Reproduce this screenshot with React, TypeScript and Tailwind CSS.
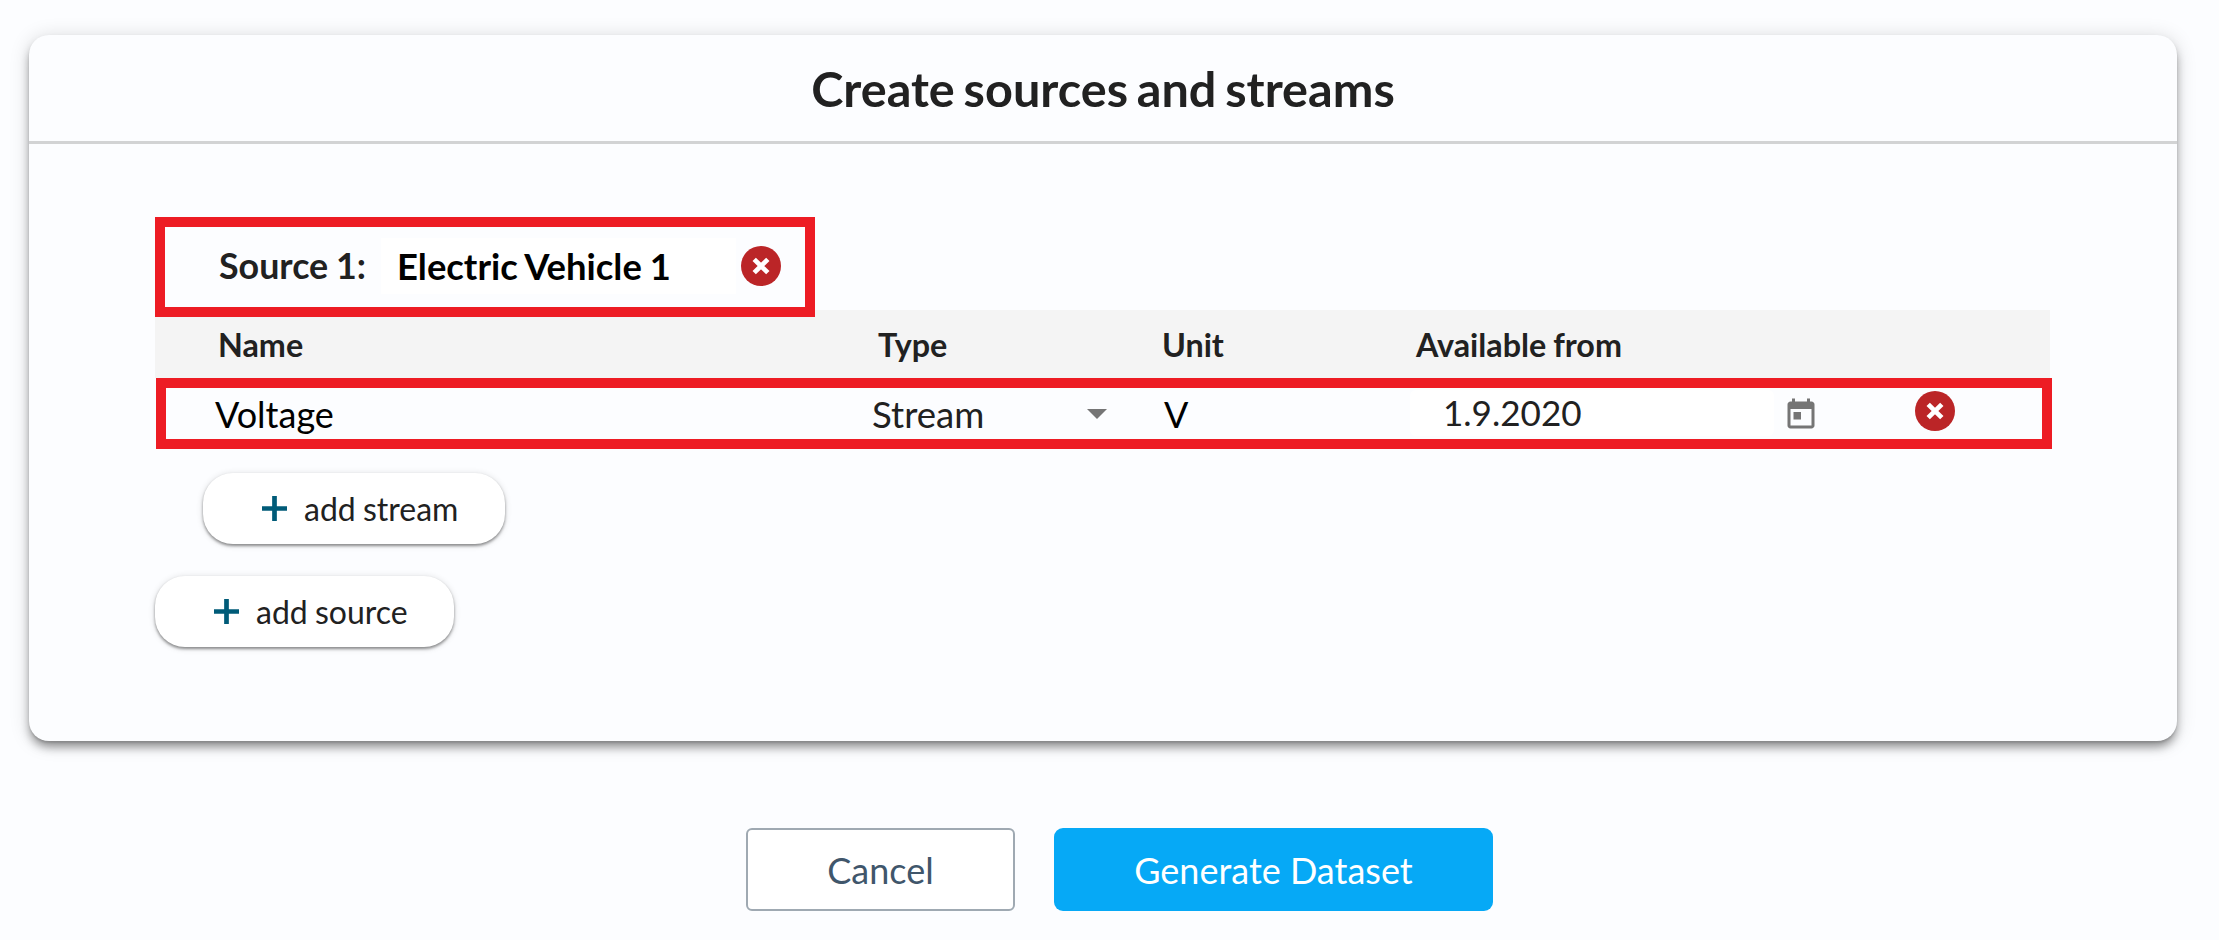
import type { ReactNode } from "react";

function RemoveIcon() {
  return (
    <svg viewBox="0 0 40 40" className="block size-10 shrink-0">
      <circle cx="20" cy="20" r="20" fill="#bb2527" />
      <path d="M13.2 13.4 L26.8 26.6 M26.8 13.4 L13.2 26.6" stroke="#fff" strokeWidth="4.8" />
    </svg>
  );
}

function TodayIcon() {
  return (
    <svg viewBox="0 0 24 24" className="block size-9 shrink-0" fill="#757575">
      <path d="M19 3h-1V1h-2v2H8V1H6v2H5c-1.11 0-1.99.9-1.99 2L3 19c0 1.1.89 2 2 2h14c1.1 0 2-.9 2-2V5c0-1.1-.9-2-2-2zm0 16H5V8h14v11zM7 10h5v5H7z" />
    </svg>
  );
}

function AddButton({ children, className }: { children: ReactNode; className: string }) {
  return (
    <button
      className={`flex h-[71px] items-center rounded-[30px] bg-white pl-[59px] text-[32px] leading-none text-[#212121] [word-spacing:-1px] shadow-[0_2px_3px_rgba(0,0,0,0.4),0_1px_7px_rgba(0,0,0,0.14)] ${className}`}
    >
      <svg viewBox="0 0 25 25" className="mr-[17px] block size-[25px] shrink-0">
        <path d="M12.5 0V25M0 12.5H25" stroke="#005b78" strokeWidth="4.7" />
      </svg>
      <span>{children}</span>
    </button>
  );
}

export default function App() {
  return (
    <div className="h-[940px] w-[2219px] overflow-hidden bg-[#fcfdff] pt-[35px] pl-[29px] font-['Lato',sans-serif] text-[#212121]">
      <section className="h-[706px] w-[2148px] rounded-[20px] bg-[#fcfdff] shadow-[0_7px_10px_-1px_rgba(0,0,0,0.38),0_2px_2px_rgba(0,0,0,0.1),0_2px_20px_rgba(0,0,0,0.15)]">
        <h1 className="flex h-[109px] items-center justify-center border-b-[3px] border-[#d2d3d4] text-[48.6px] leading-none font-bold [word-spacing:-3px]">
          <span>Create sources and streams</span>
        </h1>

        <div className="pt-[73px] pl-[126px]">
          <div className="relative flex h-[100px] w-[660px] items-center border-[10px] border-[#ed1c24] pl-[54px] text-[35.8px] leading-none font-bold">
            <span className="-mt-0.5 w-[162px] [word-spacing:-1px]">Source 1:</span>
            <span className="-mt-0.5 flex h-14 w-[355px] items-center bg-white pl-4 text-[36.4px] text-black [word-spacing:-1px]">
              Electric Vehicle 1
            </span>
            <span className="-mt-0.5 ml-[5px]">
              <RemoveIcon />
            </span>
          </div>

          <div className="-mt-[7px] flex h-[68px] w-[1895px] items-center bg-[#f4f4f4] pt-0.5 text-[32.3px] leading-none font-bold">
            <span className="w-[723px] pl-[63px]">Name</span>
            <span className="w-[284px]">Type</span>
            <span className="w-[254px]">Unit</span>
            <span className="[word-spacing:-1px]">Available from</span>
          </div>

          <div className="ml-px flex h-[71px] w-[1896px] items-center border-[10px] border-[#ed1c24] text-[36px] leading-none">
            <span className="w-[706px] pl-[49px] text-black">Voltage</span>
            <span className="mt-px w-[215px] text-[36.6px]">Stream</span>
            <svg viewBox="0 0 20 10" className="mt-px h-2.5 w-5">
              <path d="M0 0H20L10 10Z" fill="#757575" />
            </svg>
            <span className="w-[303px] pl-[57px] text-black">V</span>
            <span className="-mt-0.5 flex h-[46px] w-[364px] items-center rounded-md bg-white pl-[33px] text-[35.1px]">
              1.9.2020
            </span>
            <span className="mt-[3px] ml-[9px]">
              <TodayIcon />
            </span>
            <span className="-mt-[5px] ml-[96px]">
              <RemoveIcon />
            </span>
          </div>

          <AddButton className="mt-6 ml-12 w-[302px]">add stream</AddButton>
          <AddButton className="mt-8 w-[299px]">add source</AddButton>
        </div>
      </section>

      <div className="mt-[87px] flex h-[83px] gap-[39px] pl-[717px] text-[36px] leading-none">
        <button className="w-[269px] rounded-[6px] border-2 border-[#9fa9b2] bg-white text-[#40566b]">Cancel</button>
        <button className="w-[439px] rounded-[9px] bg-[#06a9f6] text-white">Generate Dataset</button>
      </div>
    </div>
  );
}
